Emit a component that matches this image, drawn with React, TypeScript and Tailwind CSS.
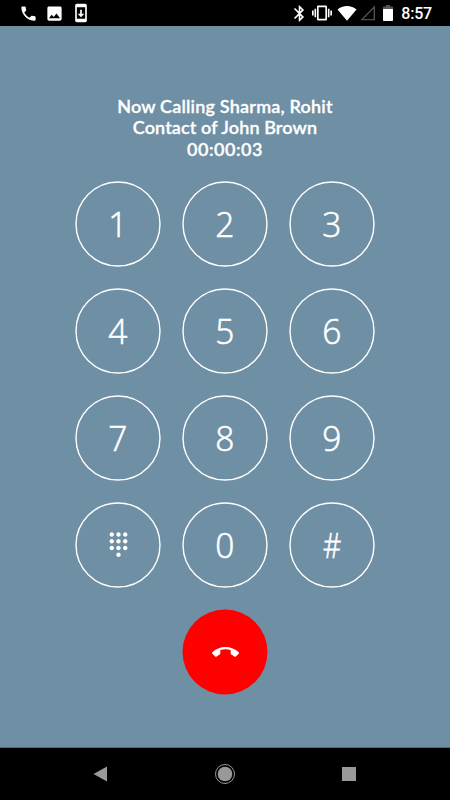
import type { ReactNode } from "react";
import {
  MdBluetooth,
  MdCallEnd,
  MdDialpad,
  MdImage,
  MdPhone,
  MdSystemUpdate,
  MdVibration,
} from "react-icons/md";

const KEYS = ["1", "2", "3", "4", "5", "6", "7", "8", "9", "dialpad", "0", "#"];

function StatusBar() {
  return (
    <header className="flex h-[26px] shrink-0 items-center justify-between bg-black pl-[19px] pr-[18px] text-white">
      <div className="flex items-center gap-[7px]">
        <MdPhone size={19} />
        <MdImage size={19} />
        <MdSystemUpdate size={20} />
      </div>
      <div className="flex items-center">
        <MdBluetooth size={19} />
        <MdVibration size={20} className="ml-[3px]" />
        <svg viewBox="0 0 20 16" className="ml-[5px] h-4 w-5" fill="currentColor">
          <path d="M10 15.700 0.5 4.400C3 2.100 6.400.9 10 .9s7 1.200 9.500 3.500z" />
        </svg>
        <svg viewBox="0 0 16 16" className="ml-[3px] size-4" fill="none" stroke="#505050" strokeWidth="1.400">
          <path d="M14.300 2v12.600H2z" />
        </svg>
        <svg viewBox="0 0 10 16" className="ml-[7px] h-4 w-2.5">
          <path fill="#555" d="M3 0h4v1.500h2.200q.8 0 .8.800V4H0V2.300q0-.8.8-.8H3z" />
          <path fill="#fff" d="M0 4h10v11.200q0 .8-.8.800H.8q-.8 0-.8-.8z" />
        </svg>
        <span className="ml-[8px] pt-[2px] font-['Roboto',sans-serif] text-[16px] font-medium leading-none tracking-[-0.2px]">
          8:57
        </span>
      </div>
    </header>
  );
}

function CallInfo() {
  return (
    <div className="flex flex-col items-center font-['Lato',sans-serif] text-[18px] font-semibold leading-[21.5px] [-webkit-text-stroke:0.3px_white]">
      <p className="tracking-[0.2px]">Now Calling Sharma, Rohit</p>
      <p className="tracking-[0.1px]">Contact of John Brown</p>
      <p className="tracking-[0.5px]">00:00:03</p>
    </div>
  );
}

function Key({ children }: { children: ReactNode }) {
  return (
    <button className="relative flex size-[86px] items-center justify-center font-['Open_Sans',sans-serif] text-[34.5px] font-light leading-none [-webkit-text-stroke:0.6px_white]">
      <svg viewBox="0 0 86 86" className="absolute inset-0" fill="none" stroke="currentColor" strokeWidth="1.400">
        <circle cx="43" cy="43" r="42" />
      </svg>
      {children}
    </button>
  );
}

function KeyLabel({ value }: { value: string }) {
  if (value === "dialpad") return <MdDialpad size={27} />;
  if (value === "#") return <span className="scale-x-[0.82] pt-[2px]">#</span>;
  return <span className="scale-x-[0.97] pt-[2px]">{value}</span>;
}

function NavBar() {
  return (
    <nav className="flex h-[53px] shrink-0 items-center justify-between border-t border-[#4f6a7d] bg-black pl-[93px] pr-[94px] text-[#999]">
      <svg viewBox="0 0 14 16" className="h-4 w-3.5" fill="currentColor">
        <path d="M14 .5v15L.5 8z" />
      </svg>
      <svg viewBox="0 0 22 22" className="size-[22px]">
        <circle cx="11" cy="11" r="9.500" fill="none" stroke="currentColor" />
        <circle cx="11" cy="11" r="7.300" fill="currentColor" />
      </svg>
      <div className="size-3.5 bg-[#999]" />
    </nav>
  );
}

export default function App() {
  return (
    <div className="flex h-[800px] w-[450px] flex-col overflow-hidden bg-[#6f8fa5] text-white">
      <StatusBar />
      <main className="flex flex-1 flex-col items-center pt-[69.5px]">
        <CallInfo />
        <div className="mt-[20.5px] grid grid-cols-3 gap-[21px]">
          {KEYS.map((key) => (
            <Key key={key}>
              <KeyLabel value={key} />
            </Key>
          ))}
        </div>
        <button className="relative mt-[21px] flex size-[86px] items-center justify-center">
          <svg viewBox="0 0 86 86" className="absolute inset-0" fill="#ff0000">
            <circle cx="43" cy="43" r="42.500" />
          </svg>
          <MdCallEnd size={27} className="relative mt-px" />
        </button>
      </main>
      <NavBar />
    </div>
  );
}
